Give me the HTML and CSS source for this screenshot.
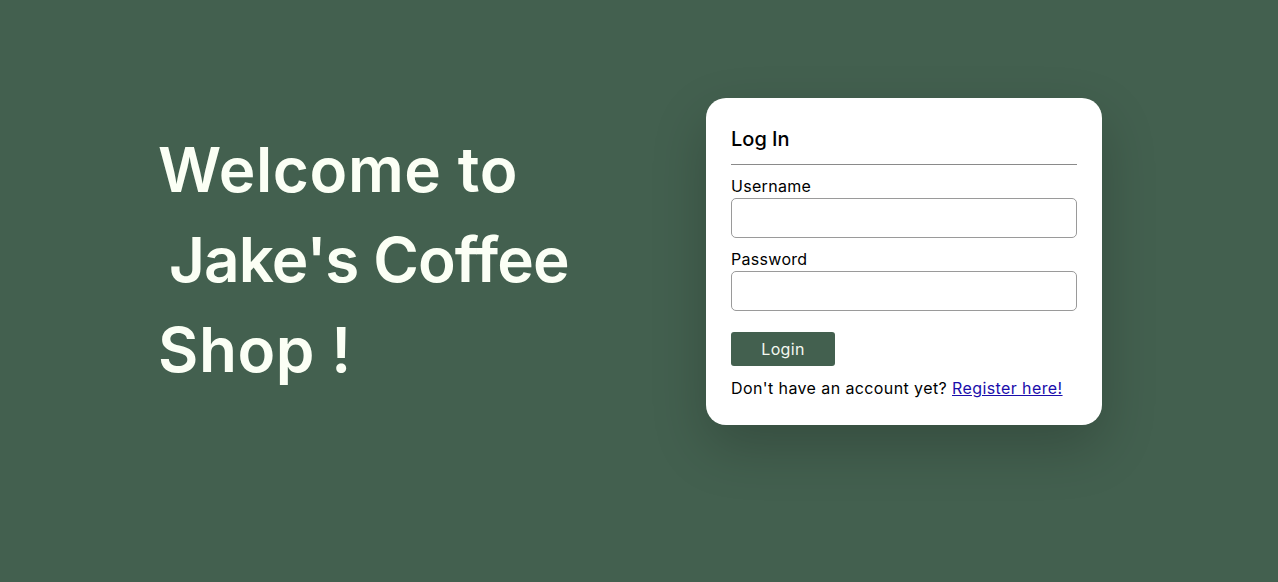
FILE: index.html
```html
<!DOCTYPE html>
<html lang="en">
<head>
<meta charset="utf-8">
<title>Jake's Coffee Shop</title>
<link rel="stylesheet" href="styles.css">
</head>
<body>
<main class="page">
  <section class="hero">
    <h1 class="hero-title">Welcome to<br><span class="indent">Jake's Coffee</span><br>Shop !</h1>
  </section>
  <section class="card">
    <h2 class="card-title">Log In</h2>
    <hr class="divider">
    <form class="form">
      <label class="label" for="username">Username</label>
      <input class="input" id="username" type="text">
      <label class="label" for="password">Password</label>
      <input class="input" id="password" type="password">
      <button class="btn" type="button">Login</button>
    </form>
    <p class="register">Don't have an account yet? <a href="#" class="link">Register here!</a></p>
  </section>
</main>
</body>
</html>
```
FILE: styles.css
```css
* { box-sizing: border-box; }
html, body {
  margin: 0;
  height: 100%;
}
body {
  background: #43604f;
  font-family: "Inter", "Open Sans", sans-serif;
  color: #000;
}
.page {
  display: flex;
  align-items: flex-start;
  padding: 98px 0 0 158px;
}
.hero {
  width: 548px;
}
.hero-title {
  margin: 27px 0 0;
  color: #fbfff5;
  font-size: 62px;
  line-height: 90px;
  font-weight: 600;
  letter-spacing: 0.6px;
}
.indent {
  padding-left: 11px;
  letter-spacing: -0.9px;
}
.card {
  width: 396px;
  background: #fff;
  border-radius: 20px;
  padding: 25px 25px 25px;
  box-shadow: 0 22px 55px rgba(0, 0, 0, 0.2);
}
.card-title {
  margin: 0;
  font-size: 20px;
  line-height: 32px;
  font-weight: 500;
}
.divider {
  border: 0;
  border-top: 1px solid #8a8a8a;
  margin: 9px 0 10px;
}
.form {
  display: flex;
  flex-direction: column;
}
.label {
  font-size: 16px;
  line-height: 23px;
  letter-spacing: 0.3px;
}
.input {
  height: 40px;
  border: 1px solid #9a9a9a;
  border-radius: 5px;
  margin: 0 0 10px;
  font: inherit;
}
.btn {
  align-self: flex-start;
  width: 104px;
  height: 34px;
  margin-top: 11px;
  background: #43604f;
  color: #f4f8f0;
  border: 0;
  border-radius: 3px;
  font-family: inherit;
  font-size: 16px;
  letter-spacing: 0.3px;
}
.register {
  margin: 10px 0 0;
  font-size: 16px;
  line-height: 24px;
  letter-spacing: 0.4px;
}
.link {
  color: #1a0dab;
}
```
